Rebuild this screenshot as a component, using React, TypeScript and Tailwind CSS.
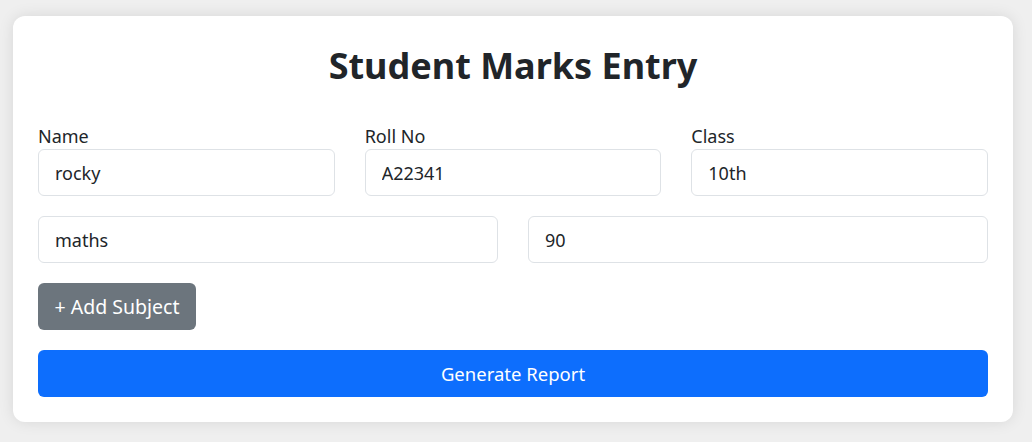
export default function App() {
  return (
    <div className="min-h-screen bg-[#efefef] pt-4 px-[13px]" style={{ fontFamily: '"Noto Sans", "Open Sans", sans-serif' }}>
      <div className="w-[1000px] bg-white rounded-xl shadow-[0_0_15px_rgba(0,0,0,0.1)] px-[25px] pt-[28px] pb-[25px] text-[#212529]">
        <h2 className="text-center text-[36px] font-bold leading-[1.2] mb-[37px]">Student Marks Entry</h2>
        <div className="grid grid-cols-3 gap-[30px]">
          {[["Name", "rocky"], ["Roll No", "A22341"], ["Class", "10th"]].map(([l, v]) => (
            <div key={l} className="flex flex-col">
              <label className="text-[18px] leading-[25px]">{l}</label>
              <input
                defaultValue={v}
                className="h-[47px] border border-[#dee2e6] rounded-[6px] px-[16px] text-[18px] outline-none"
              />
            </div>
          ))}
        </div>
        <div className="grid grid-cols-2 gap-[30px] mt-[20px]">
          <input defaultValue="maths" className="h-[47px] border border-[#dee2e6] rounded-[6px] px-[16px] text-[18px] outline-none" />
          <input defaultValue="90" className="h-[47px] border border-[#dee2e6] rounded-[6px] px-[16px] text-[18px] outline-none" />
        </div>
        <div className="mt-[20px]">
          <button className="h-[47px] w-[158px] bg-[#6c757d] text-white rounded-[6px] text-[19.5px]">+ Add Subject</button>
        </div>
        <button className="mt-[20px] w-full h-[47px] bg-[#0d6efd] text-white rounded-[6px] text-[18.5px]">Generate Report</button>
      </div>
    </div>
  );
}
